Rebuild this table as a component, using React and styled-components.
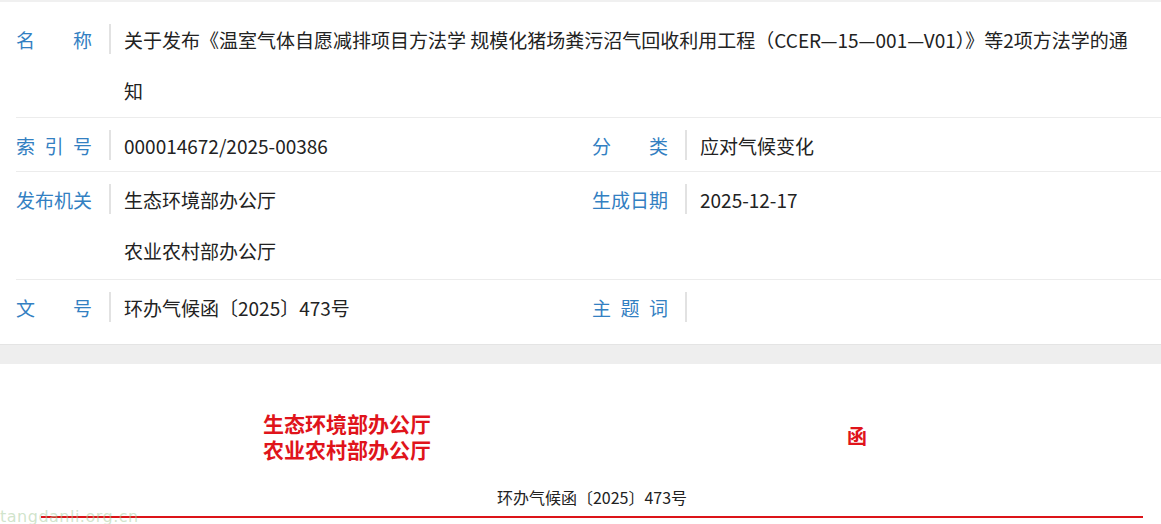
import React from "react";
import styled, { createGlobalStyle } from "styled-components";

const Global = createGlobalStyle`
  html, body { margin: 0; padding: 0; background: #fff; }
  body { font-family: "Noto Sans CJK SC", "Noto Sans", sans-serif; color: #222; }
`;

const Page = styled.div`
  position: relative;
  width: 1161px;
  height: 524px;
  overflow: hidden;
  background: #fff;
`;

const InfoTable = styled.div`
  border-top: 2px solid #f0f0f0;
  padding-left: 16px;
`;

const Row = styled.div`
  display: grid;
  grid-template-columns: ${(p) => (p.$split ? "576px 1fr" : "1fr")};
  padding-top: ${(p) => p.$padTop || 2}px;
  padding-bottom: ${(p) => p.$padBottom || 0}px;
  border-bottom: ${(p) => (p.$last ? "none" : "1px solid #ececec")};
`;

const Cell = styled.div`
  display: flex;
  align-items: flex-start;
  min-width: 0;
`;

const Label = styled.div`
  flex: none;
  width: 76px;
  font-size: 19px;
  line-height: 51px;
  color: #3380c2;
  text-align: justify;
  text-align-last: justify;
  white-space: nowrap;
`;

const Sep = styled.div`
  flex: none;
  width: 2px;
  height: 30px;
  margin: 10px 13px 0 17px;
  background: #e2e2e2;
`;

const Value = styled.div`
  flex: 1;
  min-width: 0;
  font-size: 19px;
  line-height: 51px;
  color: #222;
  padding-right: ${(p) => p.$padRight || 0}px;
`;

const Band = styled.div`
  margin-top: 11px;
  height: 19px;
  background: #eeeeee;
  border-top: 1px solid #e4e4e4;
`;

const Doc = styled.div`
  margin: 0 18px 0 41px;
  padding-top: 46px;
`;

const Header = styled.div`
  display: flex;
  align-items: center;
  padding-left: 222px;
  gap: 416px;
`;

const Orgs = styled.div`
  color: #e0141b;
  font-weight: 700;
  font-size: 21px;
  line-height: 26px;
  white-space: nowrap;
`;

const Han = styled.div`
  color: #e0141b;
  font-weight: 700;
  font-size: 20px;
  line-height: 26px;
`;

const DocNo = styled.div`
  margin-top: 24px;
  text-align: center;
  font-size: 16px;
  line-height: 22px;
  color: #222;
  padding-bottom: 8px;
  border-bottom: 2px solid #dc1419;
`;

const Watermark = styled.div`
  position: absolute;
  left: 0;
  top: 507px;
  font-family: "DejaVu Sans", sans-serif;
  font-size: 16px;
  letter-spacing: 0.5px;
  color: rgba(170, 205, 160, 0.55);
  pointer-events: none;
`;

const title =
  "关于发布《温室气体自愿减排项目方法学 规模化猪场粪污沼气回收利用工程（CCER—15—001—V01）》等2项方法学的通知";

export default function App() {
  return (
    <Page>
      <Global />
      <InfoTable>
        <Row $padTop={12} $padBottom={1}>
          <Cell>
            <Label>名称</Label>
            <Sep />
            <Value $padRight={20}>{title}</Value>
          </Cell>
        </Row>
        <Row $split>
          <Cell>
            <Label>索引号</Label>
            <Sep />
            <Value>000014672/2025-00386</Value>
          </Cell>
          <Cell>
            <Label>分类</Label>
            <Sep />
            <Value>应对气候变化</Value>
          </Cell>
        </Row>
        <Row $split $padBottom={3}>
          <Cell>
            <Label>发布机关</Label>
            <Sep />
            <Value>
              <div>生态环境部办公厅</div>
              <div>农业农村部办公厅</div>
            </Value>
          </Cell>
          <Cell>
            <Label>生成日期</Label>
            <Sep />
            <Value>2025-12-17</Value>
          </Cell>
        </Row>
        <Row $split $last>
          <Cell>
            <Label>文号</Label>
            <Sep />
            <Value>环办气候函〔2025〕473号</Value>
          </Cell>
          <Cell>
            <Label>主题词</Label>
            <Sep />
            <Value />
          </Cell>
        </Row>
      </InfoTable>
      <Band />
      <Doc>
        <Header>
          <Orgs>
            <div>生态环境部办公厅</div>
            <div>农业农村部办公厅</div>
          </Orgs>
          <Han>函</Han>
        </Header>
        <DocNo>环办气候函〔2025〕473号</DocNo>
      </Doc>
      <Watermark>tangdanli.org.cn</Watermark>
    </Page>
  );
}
